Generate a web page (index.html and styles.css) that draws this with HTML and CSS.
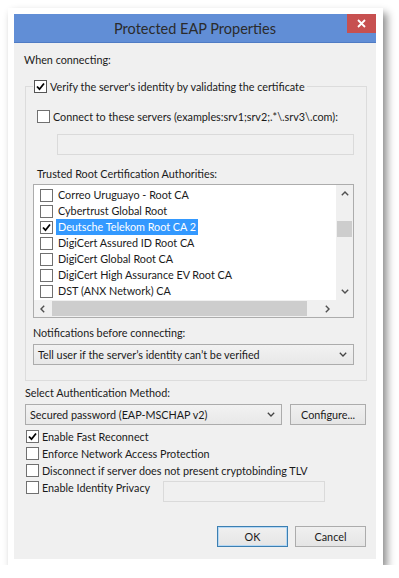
FILE: index.html
```html
<!DOCTYPE html>
<html lang="en">
<head>
    <meta charset="UTF-8">
    <title>Protected EAP Properties</title>
    <link rel="stylesheet" href="styles.css">
</head>
<body>
    <div class="window">
        <div class="titlebar">
            <span class="title">Protected EAP Properties</span>
            <span class="close">
                <svg width="9" height="9" viewBox="0 0 9 9"><path d="M1 1 L8 8 M8 1 L1 8" stroke="#fff" stroke-width="1.8"/></svg>
            </span>
        </div>

        <div class="content">
            <div class="label first">When connecting:</div>

            <fieldset class="group">
                <legend class="check-row">
                    <span class="box"><svg width="11" height="11" viewBox="0 0 11 11"><path d="M2 5.5 L4.5 8.2 L9 2.5" fill="none" stroke="#000" stroke-width="1.8"/></svg></span>
                    Verify the server's identity by validating the certificate
                </legend>

                <div class="check-row connect">
                    <span class="box"></span>
                    Connect to these servers (examples:srv1;srv2;.*\.srv3\.com):
                </div>
                <div class="textbox servers"></div>

                <div class="label trusted">Trusted Root Certification Authorities:</div>
                <div class="listbox">
                    <div class="list-body">
                        <ul class="items">
                            <li><span class="box"></span><span class="name">Correo Uruguayo - Root CA</span></li>
                            <li><span class="box"></span><span class="name">Cybertrust Global Root</span></li>
                            <li><span class="box"><svg width="11" height="11" viewBox="0 0 11 11"><path d="M2 5.5 L4.5 8.2 L9 2.5" fill="none" stroke="#000" stroke-width="1.8"/></svg></span><span class="name selected">Deutsche Telekom Root CA 2</span></li>
                            <li><span class="box"></span><span class="name">DigiCert Assured ID Root CA</span></li>
                            <li><span class="box"></span><span class="name">DigiCert Global Root CA</span></li>
                            <li><span class="box"></span><span class="name">DigiCert High Assurance EV Root CA</span></li>
                            <li><span class="box"></span><span class="name">DST (ANX Network) CA</span></li>
                        </ul>
                        <div class="vscroll">
                            <span class="arrow"><svg width="8" height="5" viewBox="0 0 8 5"><path d="M0.8 4.2 L4 1 L7.2 4.2" fill="none" stroke="#505050" stroke-width="1.4"/></svg></span>
                            <div class="vtrack"><span class="vthumb"></span></div>
                            <span class="arrow"><svg width="8" height="5" viewBox="0 0 8 5"><path d="M0.8 0.8 L4 4 L7.2 0.8" fill="none" stroke="#505050" stroke-width="1.4"/></svg></span>
                        </div>
                    </div>
                    <div class="hscroll">
                        <span class="arrow"><svg width="5" height="8" viewBox="0 0 5 8"><path d="M4.2 0.8 L1 4 L4.2 7.2" fill="none" stroke="#505050" stroke-width="1.4"/></svg></span>
                        <div class="htrack"><span class="hthumb"></span></div>
                        <span class="arrow"><svg width="5" height="8" viewBox="0 0 5 8"><path d="M0.8 0.8 L4 4 L0.8 7.2" fill="none" stroke="#505050" stroke-width="1.4"/></svg></span>
                        <span class="corner"></span>
                    </div>
                </div>

                <div class="label notify">Notifications before connecting:</div>
                <div class="combo">
                    <span>Tell user if the server’s identity can’t be verified</span>
                    <svg width="8" height="5" viewBox="0 0 8 5"><path d="M0.8 0.8 L4 4 L7.2 0.8" fill="none" stroke="#444" stroke-width="1.3"/></svg>
                </div>
            </fieldset>

            <div class="label method-label">Select Authentication Method:</div>
            <div class="method-row">
                <div class="combo method">
                    <span>Secured password (EAP-MSCHAP v2)</span>
                    <svg width="8" height="5" viewBox="0 0 8 5"><path d="M0.8 0.8 L4 4 L7.2 0.8" fill="none" stroke="#444" stroke-width="1.3"/></svg>
                </div>
                <button class="btn configure">Configure...</button>
            </div>

            <div class="options">
                <div class="check-row">
                    <span class="box"><svg width="11" height="11" viewBox="0 0 11 11"><path d="M2 5.5 L4.5 8.2 L9 2.5" fill="none" stroke="#000" stroke-width="1.8"/></svg></span>
                    Enable Fast Reconnect
                </div>
                <div class="check-row">
                    <span class="box"></span>
                    Enforce Network Access Protection
                </div>
                <div class="check-row">
                    <span class="box"></span>
                    Disconnect if server does not present cryptobinding TLV
                </div>
                <div class="check-row privacy">
                    <span class="privacy-label"><span class="box"></span>Enable Identity Privacy</span>
                    <div class="textbox identity"></div>
                </div>
            </div>

            <div class="buttons">
                <button class="btn default">OK</button>
                <button class="btn">Cancel</button>
            </div>
        </div>
    </div>
</body>
</html>
```

FILE: styles.css
```css
body {
    margin: 0;
    background-color: #fff;
    font-family: Lato, "Noto Sans", sans-serif;
    font-size: 10.8px;
    color: #1a1a1a;
}
.window {
    width: 362px;
    margin: 8px 0 0 8px;
    border: 6px solid #fff;
    border-right-width: 7px;
    box-shadow: 4px 5px 8px rgba(0, 0, 0, 0.45);
}
.titlebar {
    height: 28px;
    background-color: #618ed6;
    border-bottom: 1px solid #4f7bc4;
    display: flex;
    justify-content: center;
    align-items: center;
    position: relative;
}
.title {
    font-size: 14.5px;
    color: #2b2b2b;
}
.close {
    position: absolute;
    top: 0;
    right: 0;
    width: 29px;
    height: 19px;
    background-color: #c75050;
    display: flex;
    align-items: center;
    justify-content: center;
}
.content {
    background-color: #f0f0f0;
    padding: 0 9px 12px 11px;
    display: flex;
    flex-direction: column;
}
.label {
    line-height: 16px;
    height: 16px;
}
.label.first {
    margin: 9px 0 0 -1px;
}
.group {
    margin: 10px 0 0 0;
    padding: 0 12px 15px 7px;
    border: 1px solid #dcdcdc;
    display: flex;
    flex-direction: column;
}
.group legend {
    margin-left: 0;
    padding: 0 2px 0 1px;
}
.check-row {
    display: flex;
    align-items: center;
    height: 17px;
    line-height: 17px;
}
.box {
    width: 11px;
    height: 11px;
    border: 1px solid #555;
    background-color: #fff;
    margin-right: 3px;
    display: flex;
    flex-shrink: 0;
}
.connect {
    margin: 13px 0 0 4px;
}
.connect .box {
    border-color: #707070;
}
.textbox {
    height: 19px;
    border: 1px solid #dadada;
    background-color: #f0f0f0;
}
.servers {
    margin: 9px 0 0 24px;
}
.trusted {
    margin: 11px 0 0 4px;
}
.listbox {
    margin-top: 2px;
    height: 132px;
    border: 1px solid #acacac;
    background-color: #fff;
    display: flex;
    flex-direction: column;
}
.list-body {
    flex: 1;
    display: flex;
    overflow: hidden;
}
.items {
    flex: 1;
    list-style: none;
    margin: 0;
    padding: 2px 0 0 6px;
    overflow: hidden;
}
.items li {
    display: flex;
    align-items: center;
    height: 16px;
}
.items .box {
    border-color: #707070;
    margin-right: 3px;
}
.name {
    padding: 0 2px;
    line-height: 16px;
}
.name.selected {
    background-color: #3399ff;
    color: #fff;
}
.vscroll {
    width: 17px;
    background-color: #f0f0f0;
    display: flex;
    flex-direction: column;
}
.arrow {
    width: 17px;
    height: 17px;
    display: flex;
    align-items: center;
    justify-content: center;
    flex-shrink: 0;
}
.vtrack {
    flex: 1;
    padding-top: 19px;
}
.vthumb {
    display: block;
    width: 15px;
    height: 16px;
    margin-left: 1px;
    background-color: #cdcdcd;
}
.hscroll {
    height: 17px;
    background-color: #f0f0f0;
    display: flex;
}
.htrack {
    flex: 1;
    display: flex;
    align-items: center;
    padding-left: 1px;
}
.hthumb {
    display: block;
    width: 255px;
    height: 15px;
    background-color: #cdcdcd;
}
.corner {
    width: 17px;
    background-color: #f0f0f0;
}
.notify {
    margin-top: 7px;
}
.combo {
    margin-top: 3px;
    height: 19px;
    border: 1px solid #acacac;
    background: linear-gradient(#f2f2f2, #e8e8e8);
    display: flex;
    align-items: center;
    justify-content: space-between;
    padding: 0 6px 0 4px;
}
.method-label {
    margin-top: 4px;
}
.method-row {
    display: flex;
    gap: 8px;
    margin-top: 3px;
}
.combo.method {
    margin-top: 0;
    width: 246px;
    height: 19px;
}
.btn {
    font-family: inherit;
    font-size: 10.8px;
    color: #1a1a1a;
    height: 21px;
    border: 1px solid #acacac;
    background: linear-gradient(#f0f0f0, #e5e5e5);
    padding: 0;
}
.configure {
    width: 76px;
    margin-right: 1px;
}
.options {
    margin-top: 3px;
    display: flex;
    flex-direction: column;
}
.options .check-row {
    margin-left: 1px;
}
.options .box {
    border-color: #707070;
}
.privacy {
    align-items: flex-start;
    height: auto;
}
.privacy-label {
    width: 137px;
    display: flex;
    align-items: center;
    height: 17px;
}
.identity {
    width: 160px;
    height: 19px;
    margin-top: 2px;
}
.buttons {
    margin-top: 24px;
    display: flex;
    justify-content: flex-end;
    gap: 7px;
    padding-right: 1px;
}
.buttons .btn {
    width: 71px;
}
.btn.default {
    border-color: #3c7fb1;
    box-shadow: inset 0 0 0 1px #b5d8f5;
}
```
